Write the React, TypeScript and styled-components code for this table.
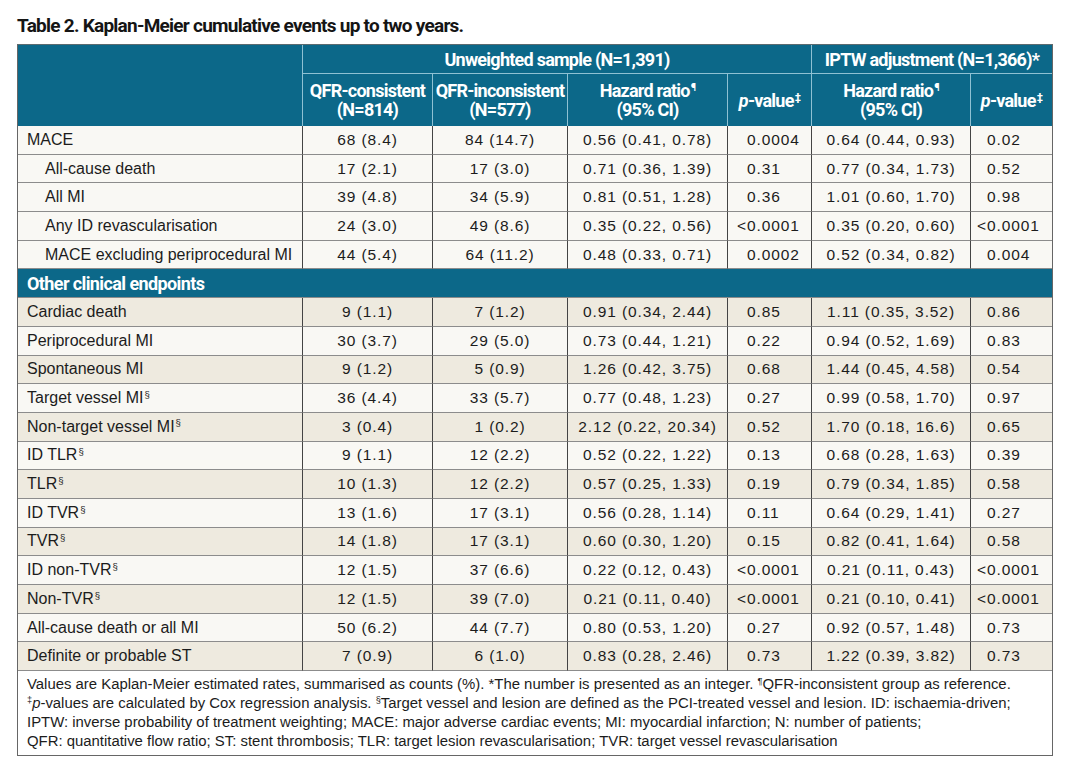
import React from "react";
import styled, { createGlobalStyle } from "styled-components";

const Global = createGlobalStyle`
  html, body { margin: 0; padding: 0; background: #ffffff; }
`;

const TEAL = "#0c6889";
const HEAD_LINE = "#8fc1d3";
const VLINE = "#444444";
const HLINE = "#8c8c8c";
const LIGHT = "#f9f8f4";
const BEIGE = "#eeeadf";
const NARROW = `Roboto, "Liberation Sans", sans-serif`;
const SANS = `"Liberation Sans", Arial, sans-serif`;

const Page = styled.div`
  padding: 14px 16px 0 17px;
  width: 1036px;
`;

const Title = styled.h1`
  margin: 0 0 7px;
  font-family: ${NARROW};
  font-weight: 700;
  font-size: 19px;
  letter-spacing: -0.75px;
  line-height: 23px;
  color: #151515;
`;

const Table = styled.table`
  width: 1036px;
  table-layout: fixed;
  border-collapse: separate;
  border-spacing: 0;
  border-top: 1px solid #5c6b70;
  border-left: 1px solid #666666;
  border-right: 1px solid #666666;
  border-bottom: 1px solid #666666;
  box-sizing: border-box;
`;

const HeadCell = styled.th<{ $last?: boolean; $under?: boolean; $h: number }>`
  background: ${TEAL};
  color: #ffffff;
  font-family: ${NARROW};
  font-weight: 700;
  font-size: 18px;
  letter-spacing: -0.75px;
  line-height: 19px;
  text-align: center;
  vertical-align: middle;
  padding: 0 1px;
  height: ${(p) => p.$h}px;
  box-sizing: border-box;
  border-right: ${(p) => (p.$last ? "none" : `1px solid ${HEAD_LINE}`)};
  border-bottom: ${(p) => (p.$under ? `1px solid ${HEAD_LINE}` : "none")};
  white-space: nowrap;
`;

const HeadLine = styled.span`
  display: block;
`;

const Italic = styled.i`
  font-style: italic;
`;

const Mark = styled.sup`
  font-size: 0.6em;
  line-height: 0;
  vertical-align: 0.55em;
  margin-left: 1px;
`;

const Row = styled.tr<{ $tone: "light" | "beige" }>`
  background: ${(p) => (p.$tone === "beige" ? BEIGE : LIGHT)};
`;

const Label = styled.td<{ $indent?: boolean }>`
  font-family: ${SANS};
  font-size: 16px;
  color: #1c1c1c;
  height: 28.7px;
  box-sizing: border-box;
  padding: 0 0 0 ${(p) => (p.$indent ? 27 : 9)}px;
  border-right: 1px solid ${VLINE};
  border-bottom: 1px solid ${HLINE};
  white-space: nowrap;
  vertical-align: middle;
`;

const Num = styled.td<{ $last?: boolean; $align?: "center" | "left"; $pad?: number }>`
  font-family: ${SANS};
  font-size: 15.5px;
  letter-spacing: 0.9px;
  color: #1c1c1c;
  height: 28.7px;
  box-sizing: border-box;
  text-align: ${(p) => p.$align || "center"};
  padding: 0 0 0 ${(p) => p.$pad || 0}px;
  border-right: ${(p) => (p.$last ? "none" : `1px solid ${VLINE}`)};
  border-bottom: 1px solid ${HLINE};
  white-space: nowrap;
  vertical-align: middle;
`;

const Lt = styled.span`
  margin-left: -0.64em;
`;

const SectionCell = styled.td`
  background: ${TEAL};
  color: #ffffff;
  font-family: ${NARROW};
  font-weight: 700;
  font-size: 18px;
  letter-spacing: -0.6px;
  height: 28.7px;
  box-sizing: border-box;
  padding: 0 0 0 9px;
  border-bottom: 1px solid ${HLINE};
  vertical-align: middle;
`;

const NoteCell = styled.td`
  background: #ffffff;
  font-family: ${SANS};
  font-size: 14.9px;
  line-height: 19px;
  color: #1c1c1c;
  padding: 4px 0 4px 9px;
`;

const NoteLine = styled.div`
  white-space: nowrap;
`;

const NoteMark = styled.sup`
  font-size: 0.62em;
  line-height: 0;
  vertical-align: 0.5em;
`;

type DataRow = {
  label: string;
  mark?: boolean;
  indent?: boolean;
  v: [string, string, string, string, string, string];
};

const top: DataRow[] = [
  { label: "MACE", v: ["68 (8.4)", "84 (14.7)", "0.56 (0.41, 0.78)", "0.0004", "0.64 (0.44, 0.93)", "0.02"] },
  { label: "All-cause death", indent: true, v: ["17 (2.1)", "17 (3.0)", "0.71 (0.36, 1.39)", "0.31", "0.77 (0.34, 1.73)", "0.52"] },
  { label: "All MI", indent: true, v: ["39 (4.8)", "34 (5.9)", "0.81 (0.51, 1.28)", "0.36", "1.01 (0.60, 1.70)", "0.98"] },
  { label: "Any ID revascularisation", indent: true, v: ["24 (3.0)", "49 (8.6)", "0.35 (0.22, 0.56)", "<0.0001", "0.35 (0.20, 0.60)", "<0.0001"] },
  { label: "MACE excluding periprocedural MI", indent: true, v: ["44 (5.4)", "64 (11.2)", "0.48 (0.33, 0.71)", "0.0002", "0.52 (0.34, 0.82)", "0.004"] },
];

const other: DataRow[] = [
  { label: "Cardiac death", v: ["9 (1.1)", "7 (1.2)", "0.91 (0.34, 2.44)", "0.85", "1.11 (0.35, 3.52)", "0.86"] },
  { label: "Periprocedural MI", v: ["30 (3.7)", "29 (5.0)", "0.73 (0.44, 1.21)", "0.22", "0.94 (0.52, 1.69)", "0.83"] },
  { label: "Spontaneous MI", v: ["9 (1.2)", "5 (0.9)", "1.26 (0.42, 3.75)", "0.68", "1.44 (0.45, 4.58)", "0.54"] },
  { label: "Target vessel MI", mark: true, v: ["36 (4.4)", "33 (5.7)", "0.77 (0.48, 1.23)", "0.27", "0.99 (0.58, 1.70)", "0.97"] },
  { label: "Non-target vessel MI", mark: true, v: ["3 (0.4)", "1 (0.2)", "2.12 (0.22, 20.34)", "0.52", "1.70 (0.18, 16.6)", "0.65"] },
  { label: "ID TLR", mark: true, v: ["9 (1.1)", "12 (2.2)", "0.52 (0.22, 1.22)", "0.13", "0.68 (0.28, 1.63)", "0.39"] },
  { label: "TLR", mark: true, v: ["10 (1.3)", "12 (2.2)", "0.57 (0.25, 1.33)", "0.19", "0.79 (0.34, 1.85)", "0.58"] },
  { label: "ID TVR", mark: true, v: ["13 (1.6)", "17 (3.1)", "0.56 (0.28, 1.14)", "0.11", "0.64 (0.29, 1.41)", "0.27"] },
  { label: "TVR", mark: true, v: ["14 (1.8)", "17 (3.1)", "0.60 (0.30, 1.20)", "0.15", "0.82 (0.41, 1.64)", "0.58"] },
  { label: "ID non-TVR", mark: true, v: ["12 (1.5)", "37 (6.6)", "0.22 (0.12, 0.43)", "<0.0001", "0.21 (0.11, 0.43)", "<0.0001"] },
  { label: "Non-TVR", mark: true, v: ["12 (1.5)", "39 (7.0)", "0.21 (0.11, 0.40)", "<0.0001", "0.21 (0.10, 0.41)", "<0.0001"] },
  { label: "All-cause death or all MI", v: ["50 (6.2)", "44 (7.7)", "0.80 (0.53, 1.20)", "0.27", "0.92 (0.57, 1.48)", "0.73"] },
  { label: "Definite or probable ST", v: ["7 (0.9)", "6 (1.0)", "0.83 (0.28, 2.46)", "0.73", "1.22 (0.39, 3.82)", "0.73"] },
];

const PValue: React.FC<{ value: string }> = ({ value }) =>
  value.startsWith("<") ? (
    <>
      <Lt>&lt;</Lt>
      {value.slice(1)}
    </>
  ) : (
    <>{value}</>
  );

const Body: React.FC<{ row: DataRow; tone: "light" | "beige" }> = ({ row, tone }) => (
  <Row $tone={tone}>
    <Label $indent={row.indent}>
      {row.label}
      {row.mark && <Mark>§</Mark>}
    </Label>
    <Num>{row.v[0]}</Num>
    <Num>{row.v[1]}</Num>
    <Num>{row.v[2]}</Num>
    <Num $align="left" $pad={19}>
      <PValue value={row.v[3]} />
    </Num>
    <Num>{row.v[4]}</Num>
    <Num $align="left" $pad={16} $last>
      <PValue value={row.v[5]} />
    </Num>
  </Row>
);

export default function App() {
  return (
    <>
      <Global />
      <Page>
        <Title>Table 2. Kaplan-Meier cumulative events up to two years.</Title>
        <Table>
          <colgroup>
            <col style={{ width: 285 }} />
            <col style={{ width: 130 }} />
            <col style={{ width: 135 }} />
            <col style={{ width: 160 }} />
            <col style={{ width: 84 }} />
            <col style={{ width: 159 }} />
            <col />
          </colgroup>
          <thead>
            <tr>
              <HeadCell rowSpan={2} $h={81} />
              <HeadCell colSpan={4} $under $h={29}>
                Unweighted sample (N=1,391)
              </HeadCell>
              <HeadCell colSpan={2} $under $last $h={29}>
                IPTW adjustment (N=1,366)*
              </HeadCell>
            </tr>
            <tr>
              <HeadCell $h={52}>
                <HeadLine>QFR-consistent</HeadLine>
                <HeadLine>(N=814)</HeadLine>
              </HeadCell>
              <HeadCell $h={52}>
                <HeadLine>QFR-inconsistent</HeadLine>
                <HeadLine>(N=577)</HeadLine>
              </HeadCell>
              <HeadCell $h={52}>
                <HeadLine>
                  Hazard ratio<Mark>¶</Mark>
                </HeadLine>
                <HeadLine>(95% CI)</HeadLine>
              </HeadCell>
              <HeadCell $h={52}>
                <Italic>p</Italic>-value<Mark>‡</Mark>
              </HeadCell>
              <HeadCell $h={52}>
                <HeadLine>
                  Hazard ratio<Mark>¶</Mark>
                </HeadLine>
                <HeadLine>(95% CI)</HeadLine>
              </HeadCell>
              <HeadCell $h={52} $last>
                <Italic>p</Italic>-value<Mark>‡</Mark>
              </HeadCell>
            </tr>
          </thead>
          <tbody>
            {top.map((r) => (
              <Body key={r.label} row={r} tone="light" />
            ))}
            <tr>
              <SectionCell colSpan={7}>Other clinical endpoints</SectionCell>
            </tr>
            {other.map((r, i) => (
              <Body key={r.label} row={r} tone={i % 2 === 0 ? "beige" : "light"} />
            ))}
            <tr>
              <NoteCell colSpan={7}>
                <NoteLine>
                  Values are Kaplan-Meier estimated rates, summarised as counts (%). *The number is presented as an integer.{" "}
                  <NoteMark>¶</NoteMark>QFR-inconsistent group as reference.
                </NoteLine>
                <NoteLine>
                  <NoteMark>‡</NoteMark>
                  <Italic>p</Italic>-values are calculated by Cox regression analysis. <NoteMark>§</NoteMark>Target vessel
                  and lesion are defined as the PCI-treated vessel and lesion. ID: ischaemia-driven;
                </NoteLine>
                <NoteLine>
                  IPTW: inverse probability of treatment weighting; MACE: major adverse cardiac events; MI: myocardial
                  infarction; N: number of patients;
                </NoteLine>
                <NoteLine>
                  QFR: quantitative flow ratio; ST: stent thrombosis; TLR: target lesion revascularisation; TVR: target
                  vessel revascularisation
                </NoteLine>
              </NoteCell>
            </tr>
          </tbody>
        </Table>
      </Page>
    </>
  );
}
